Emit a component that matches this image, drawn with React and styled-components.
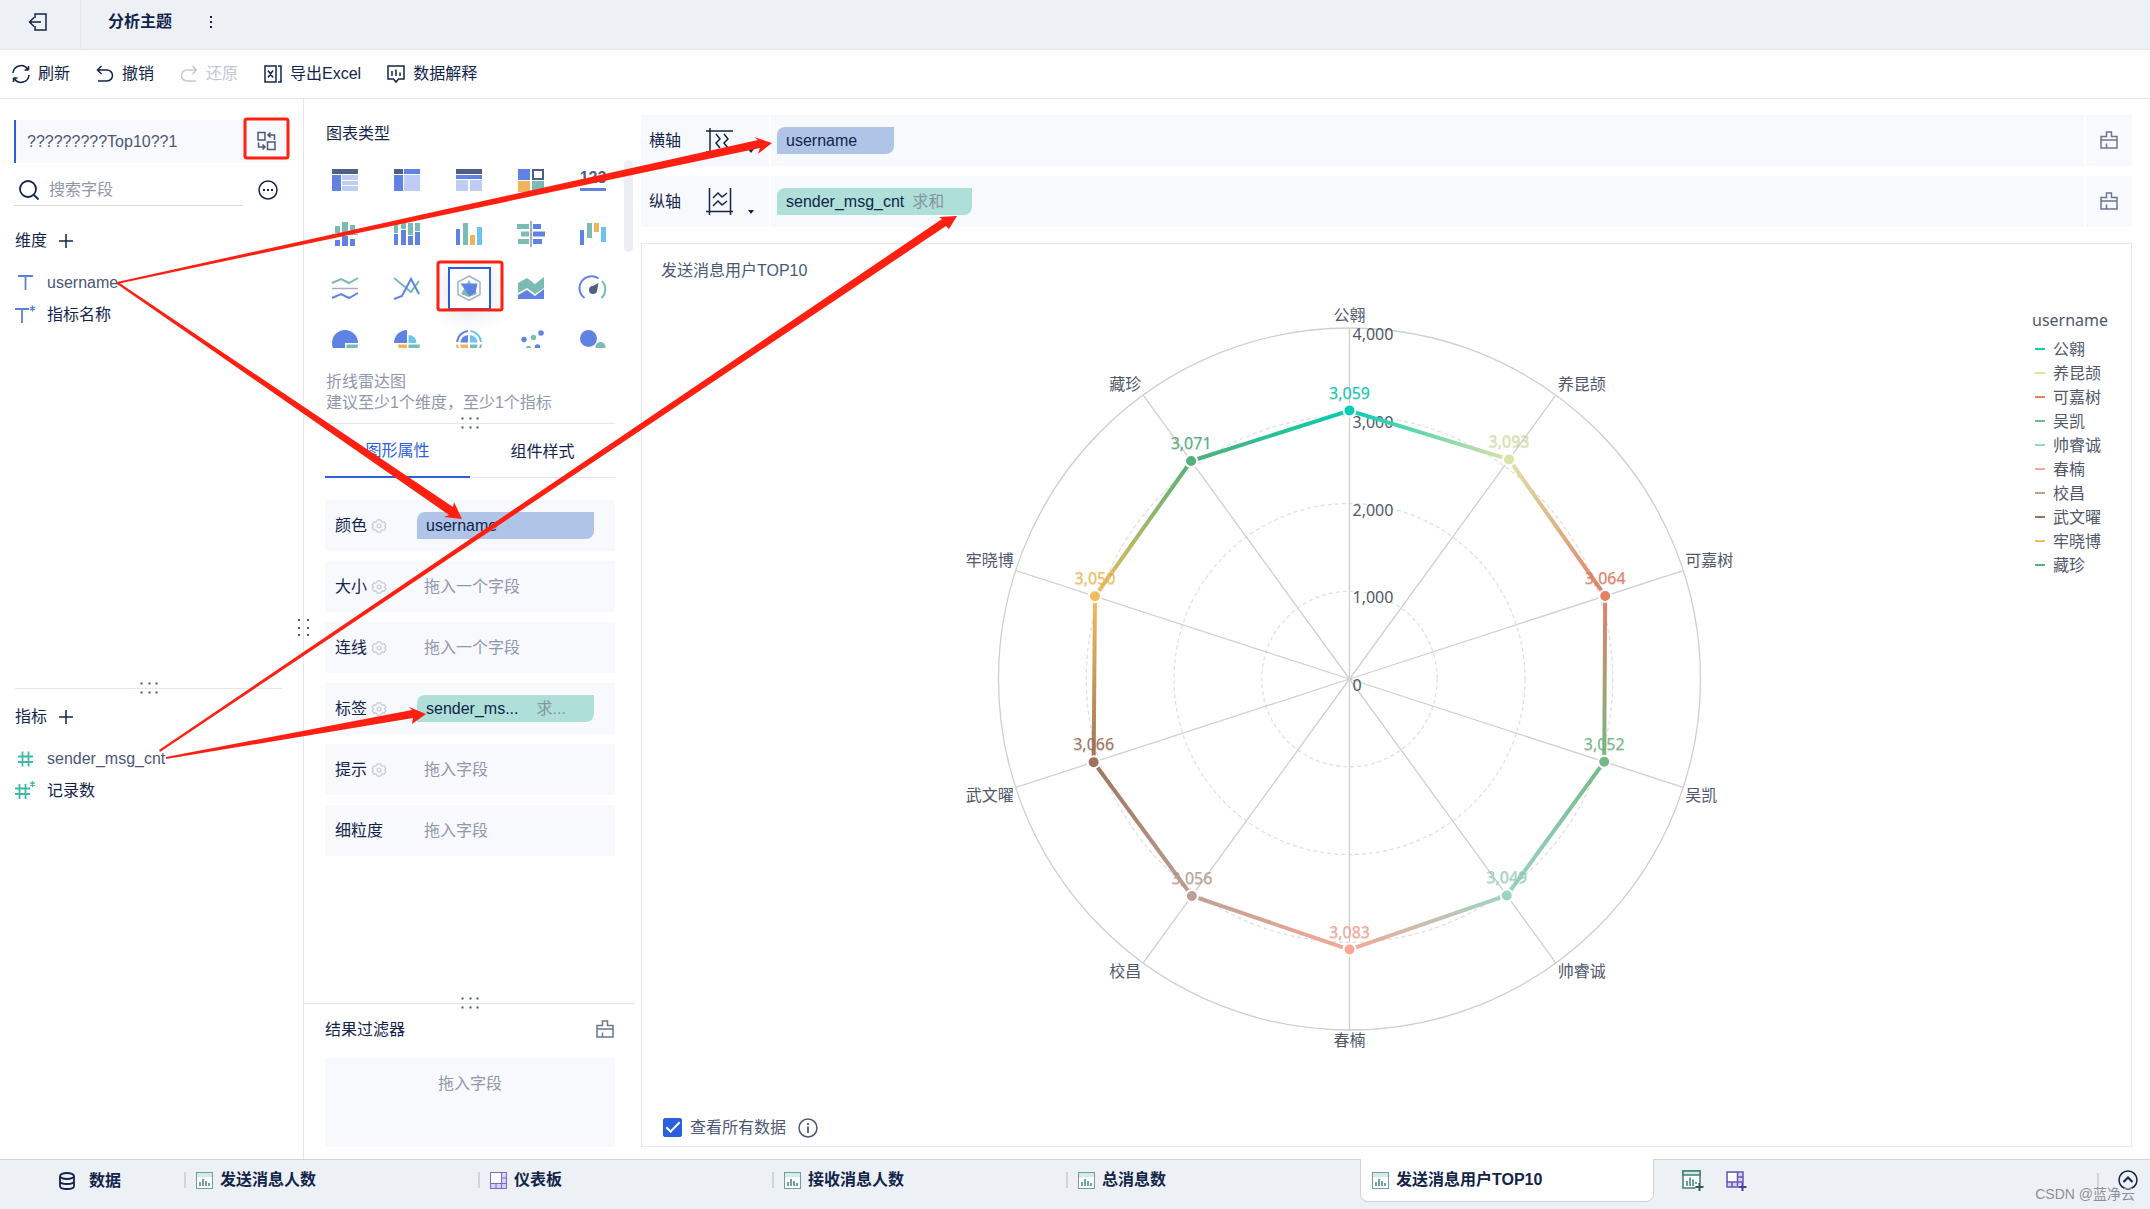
import React from "react";
import styled, { createGlobalStyle } from "styled-components";

const ink = "#12244a";
const soft = "#4a5873";
const muted = "#8f97ab";
const line = "#e4e6ef";
const fill = "#f8f9fd";
const accent = "#2b5fdb";
const red = "#ff2012";
const pal = {
  blue: "#6083e3",
  light: "#bfccf5",
  dark: "#4e5f83",
  green: "#7abcb4",
  orange: "#f0b45e",
  sky: "#6cc3ef",
  grey: "#a6afc3",
};

const GlobalStyle = createGlobalStyle`
  *, *::before, *::after { box-sizing: border-box; }
  body {
    margin: 0;
    background: #fff;
    color: ${ink};
    font: 16px/24px "Liberation Sans", "Noto Sans CJK SC", sans-serif;
  }
  button, input { font: inherit; color: inherit; }
  button { padding: 0; border: 0; background: none; cursor: pointer; }
  ul { margin: 0; padding: 0; list-style: none; }
  h1, h2, p { margin: 0; font-size: 16px; font-weight: 400; }
  svg { display: block; flex: none; overflow: visible; }
`;

const Page = styled.div`
  position: relative;
  display: flex;
  flex-direction: column;
  min-height: 100vh;
  overflow: hidden;
`;

const TopBar = styled.header`
  display: flex;
  align-items: center;
  height: 50px;
  padding-bottom: 6px;
  background: #edf1f6;
  border-bottom: 1px solid ${line};
`;

const ExitButton = styled.button`
  display: flex;
  align-items: center;
  width: 81px;
  height: 49px;
  margin-bottom: -6px;
  padding: 0 0 6px 28px;
  border-right: 1px solid ${line};
`;

const Title = styled.h1`
  padding-left: 27px;
  font-weight: 700;
`;

const MoreButton = styled.button`
  width: 24px;
  height: 24px;
  margin-left: 27px;
  display: grid;
  place-items: center;
`;

const Toolbar = styled.nav`
  display: flex;
  gap: 26px;
  height: 49px;
  padding: 0 12px;
  border-bottom: 1px solid ${line};
`;

const Tool = styled.button`
  display: flex;
  align-items: center;
  gap: 8px;
  color: ${(p) => (p.disabled ? "#c3c8d3" : ink)};
`;

const Workspace = styled.div`
  display: flex;
  flex: 1;
`;

const FieldPanel = styled.aside`
  position: relative;
  display: flex;
  flex-direction: column;
  width: 304px;
  padding: 21px 14px 0;
  border-right: 1px solid ${line};
`;

const Dataset = styled.div`
  display: flex;
  align-items: center;
  justify-content: space-between;
  height: 43px;
  padding: 0 13px 0 11px;
  background: ${fill};
  border-left: 2px solid ${accent};
  color: ${soft};
`;

const SearchRow = styled.div`
  display: flex;
  align-items: center;
  gap: 15px;
  > button { padding: 11px 11px 0 0; }
`;

const SearchBox = styled.label`
  display: flex;
  align-items: center;
  flex: 1;
  gap: 10px;
  min-width: 0;
  height: 43px;
  padding: 11px 0 0 5px;
  border-bottom: 1px solid #d5d8e0;
`;

const SearchInput = styled.input`
  flex: 1;
  min-width: 0;
  padding: 0;
  border: 0;
  outline: 0;
  background: none;
  &::placeholder { color: ${muted}; opacity: 1; }
`;

const FieldSection = styled.section`
  flex: ${(p) => (p.$size ? `0 0 ${p.$size}px` : "1")};
  padding-top: ${(p) => p.$top}px;
`;

const SectionHead = styled.div`
  display: flex;
  align-items: center;
  gap: 12px;
  height: 32px;
  margin-bottom: 10px;
  padding-left: 1px;
`;

const Field = styled.li`
  display: flex;
  align-items: center;
  gap: 9px;
  height: 32px;
  color: ${(p) => (p.$dim ? soft : ink)};
`;

const Divider = styled.div`
  position: relative;
  height: 1px;
  margin: ${(p) => p.$margin || "0"};
  background: ${line};
`;

const Grip = styled.span`
  position: absolute;
  top: 50%;
  left: 50%;
  transform: translate(-50%, -50%);
`;

const PanelGrip = styled.span`
  position: absolute;
  top: 520px;
  right: -7px;
`;

const ConfigPanel = styled.aside`
  display: flex;
  flex-direction: column;
  width: 337px;
  padding-top: 19px;
`;

const PanelTitle = styled.h2`
  padding-left: 22px;
  line-height: 32px;
`;

const Picker = styled.div`
  display: flex;
  height: 198px;
  padding: 3px 0 0 10px;
  overflow: hidden;
`;

const TypeGrid = styled.div`
  display: grid;
  grid-template-columns: repeat(5, 62px);
  grid-auto-rows: 54px;
  place-items: center;
`;

const TypeButton = styled.button`
  display: grid;
  place-items: center;
  width: 43px;
  height: 43px;
  border: 2px solid ${(p) => (p.$active ? accent : "transparent")};
  box-shadow: ${(p) => (p.$active ? "0 4px 20px rgba(40, 60, 110, 0.14)" : "none")};
`;

const ScrollThumb = styled.div`
  width: 9px;
  height: 92px;
  margin-top: 7px;
  border-radius: 5px;
  background: #edeef3;
`;

const Hint = styled.p`
  padding: 23px 0 10px 22px;
  line-height: 21px;
  color: ${muted};
`;

const Tabs = styled.div`
  display: flex;
  height: 54px;
  margin: 0 26px 0 21px;
`;

const Tab = styled.button`
  flex: 1;
  padding-top: 2px;
  color: ${(p) => (p.$active ? accent : ink)};
  border-bottom: ${(p) => (p.$active ? `2px solid ${accent}` : `1px solid ${line}`)};
`;

const PropList = styled.div`
  display: flex;
  flex: 1;
  flex-direction: column;
  gap: 10px;
  padding: 22px 26px 0 21px;
`;

const PropRow = styled.div`
  display: flex;
  align-items: center;
  height: 51px;
  padding: 0 21px 0 10px;
  background: ${fill};
`;

const PropName = styled.div`
  display: flex;
  align-items: center;
  gap: 5px;
  width: 82px;
`;

const Placeholder = styled.span`
  padding-left: 7px;
  color: ${muted};
`;

const Pill = styled.div`
  display: flex;
  align-items: center;
  flex: ${(p) => (p.$fill ? "1" : "none")};
  gap: ${(p) => (p.$fill ? 18 : 8)}px;
  min-width: 0;
  height: 27px;
  padding: 0 ${(p) => (p.$fill ? 26 : p.$pad)}px 0 9px;
  border-radius: 8px 0 8px 0;
  background: ${(p) => (p.$measure ? "#aedfd9" : "#b0c4e8")};
  small { font-size: 16px; color: #8596a2; }
`;

const Filter = styled.section`
  padding-bottom: 12px;
`;

const FilterHead = styled.div`
  display: flex;
  align-items: center;
  justify-content: space-between;
  height: 32px;
  margin: 10px 27px 12px 21px;
`;

const FilterDrop = styled.div`
  height: 89px;
  margin: 0 26px 0 21px;
  padding-top: 14px;
  text-align: center;
  background: ${fill};
  color: ${muted};
`;

const Main = styled.main`
  display: flex;
  flex: 1;
  flex-direction: column;
  min-width: 0;
  padding: 16px 18px 12px 0;
`;

const AxisRow = styled.div`
  display: flex;
  height: 51px;
  margin-bottom: ${(p) => (p.$last ? 16 : 10)}px;
  background: ${fill};
`;

const AxisHead = styled.div`
  display: flex;
  align-items: center;
  width: 130px;
  padding-left: 8px;
  border-right: 2px solid #fff;
`;

const AxisButton = styled.button`
  display: flex;
  align-items: flex-end;
  gap: 15px;
  margin-left: 25px;
`;

const AxisFields = styled.div`
  display: flex;
  align-items: center;
  flex: 1;
  padding-left: 6px;
`;

const ClearButton = styled.button`
  display: grid;
  place-items: center;
  width: 48px;
  border-left: 2px solid #fff;
`;

const Card = styled.section`
  display: flex;
  flex: 1;
  flex-direction: column;
  border: 1px solid ${line};
  color: ${soft};
`;

const CardTitle = styled.h2`
  height: 53px;
  padding: 15px 19px 0;
`;

const ChartRow = styled.div`
  display: flex;
  flex: 1;
  min-height: 0;
  padding: 0 0 48px 25px;
  font-family: "Noto Sans", "Noto Sans CJK SC", sans-serif;
`;

const RadarSvg = styled.svg`
  flex: 1;
  min-width: 0;
  height: 764px;
  text { font-size: 16px; fill: #4f586b; }
`;

const PointLabel = styled.text`
  && { fill: ${(p) => p.$color}; }
  text-shadow: 0 1px 1px rgba(90, 90, 90, 0.25);
`;

const Legend = styled.ul`
  width: 99px;
  padding-top: 11px;
`;

const LegendItem = styled.li`
  display: flex;
  align-items: center;
  gap: 8px;
  height: 24px;
  padding-left: 3px;
  white-space: nowrap;
  color: #4f586b;
  &::before {
    content: "";
    width: 10px;
    height: 2px;
    background: ${(p) => p.$color};
  }
`;

const LegendTitle = styled.p`
  margin-bottom: 5px;
  color: #4f586b;
`;

const CardFooter = styled.div`
  display: flex;
  align-items: center;
  gap: 12px;
  height: 37px;
  padding-left: 21px;
`;

const CheckLabel = styled.label`
  display: flex;
  align-items: center;
  gap: 8px;
`;

const Check = styled.input`
  display: grid;
  place-items: center;
  appearance: none;
  width: 19px;
  height: 19px;
  margin: 0;
  border-radius: 2px;
  border: 1px solid ${accent};
  &:checked { background: ${accent}; }
  &:checked::after {
    content: "";
    width: 14px;
    height: 7px;
    margin-bottom: 4px;
    border: solid #fff;
    border-width: 0 0 2px 2px;
    transform: rotate(-45deg);
  }
`;

const BottomBar = styled.footer`
  display: flex;
  height: 51px;
  background: #edf1f6;
  border-top: 1px solid #cfd2df;
`;

const DataTab = styled.button`
  display: flex;
  align-items: center;
  gap: 14px;
  width: 184px;
  height: 42px;
  padding-left: 59px;
  font-weight: 700;
`;

const SheetTab = styled.button`
  position: relative;
  display: flex;
  align-items: center;
  gap: 7px;
  width: 294px;
  height: ${(p) => (p.$active ? 43 : 40)}px;
  margin-top: ${(p) => (p.$active ? -1 : 0)}px;
  padding-left: ${(p) => (p.$active ? 11 : 12)}px;
  font-weight: 700;
  background: ${(p) => (p.$active ? "#fff" : "none")};
  border: ${(p) => (p.$active ? "1px solid #cfd2df" : "0")};
  border-top: 0;
  border-radius: 0 0 8px 8px;
  &::before {
    content: "";
    display: ${(p) => (p.$active ? "none" : "block")};
    position: absolute;
    left: 0;
    width: 2px;
    height: 16px;
    background: #d0d3dc;
  }
`;

const AddButtons = styled.div`
  display: flex;
  align-items: center;
  flex: 1;
  gap: 23px;
  height: 41px;
  padding-left: 28px;
`;

const Collapse = styled.button`
  display: flex;
  align-items: center;
  gap: 19px;
  height: 39px;
  margin-right: 12px;
  &::before {
    content: "";
    width: 2px;
    height: 14px;
    background: #d0d3dc;
  }
`;

const Watermark = styled.div`
  position: absolute;
  right: 15px;
  bottom: 4px;
  font-size: 14px;
  color: #8d9097;
`;

const Markup = styled.svg`
  position: absolute;
  top: 0;
  left: 0;
  pointer-events: none;
`;

const Glyph = ({ w = 18, h = w, sw = 1.5, color = ink, children }) => (
  <svg width={w} height={h} viewBox={`0 0 ${w} ${h}`} fill="none" stroke={color} strokeWidth={sw} aria-hidden="true">
    {children}
  </svg>
);

const Dots = ({ vertical }) => {
  const cols = vertical ? [0, 9] : [0, 8, 15];
  const rows = vertical ? [0, 8, 15] : [0, 9];
  return (
    <svg width={vertical ? 12 : 17} height={vertical ? 18 : 13} aria-hidden="true">
      {cols.map((x) => rows.map((y) => <rect key={`${x}-${y}`} x={x} y={y} width="2" height="2" fill={soft} />))}
    </svg>
  );
};

const Plus = () => (
  <Glyph w={14}><path d="M7 0v14M0 7h14" /></Glyph>
);

const Gear = () => (
  <Glyph w={14} sw={1.2} color="#c5cad6">
    <path d="M5.300 .8h3.400l.7 1.800 1 .6 1.900-.3 1.500 2.500L12.600 7l1.200 1.600-1.500 2.500-1.900-.3-1 .6-.7 1.800H5.300l-.7-1.800-1-.6-1.900.3L.2 8.600 1.400 7 .2 5.400l1.500-2.500 1.900.3 1-.6z" />
    <circle cx="7" cy="7" r="2" />
  </Glyph>
);

const Brush = () => (
  <Glyph w={18} h={20} color="#6b7690">
    <path d="M1 5.500h5.500V1h5v4.500H17V17H1zM1 9h16M6.500 12.500V17" />
  </Glyph>
);

const SheetIcon = () => (
  <Glyph w={17} sw={1} color="#6f9f98">
    <rect x=".5" y=".5" width="16" height="16" fill="#fff" />
    <rect x="1" y="1" width="15" height="4" fill="#d3ece7" stroke="none" />
    <path d="M4 10v4M7 7v7M10 9v5M13 11v3" stroke="#3f877c" strokeWidth="1.5" />
  </Glyph>
);

const BoardIcon = () => (
  <Glyph w={17} sw={1} color="#7a6cc4">
    <rect x=".5" y=".5" width="16" height="16" fill="#d9d2f7" />
    <rect x="1" y="1" width="10" height="10" fill="#fff" stroke="none" />
    <path d="M11.500 .5v16M.5 11.500h16M11.500 6h5M6 11.500v5" />
  </Glyph>
);

const AddSheet = () => (
  <Glyph w={21} sw={1.5} color="#3f7f76">
    <path d="M1 1h17v17H1z" fill="#fff" />
    <path d="M1 1h17v4H1z" fill="#cfeae4" />
    <path d="M5 11v5M8 7.500V16M11 9.500V16M14 12v2" />
    <path d="M17.500 13v8M13.500 17h8" stroke="#edf1f6" strokeWidth="4" />
    <path d="M17.500 13v8M13.500 17h8" stroke="#2a5f58" strokeWidth="2" />
  </Glyph>
);

const AddBoard = () => (
  <Glyph w={21} sw={1.5} color="#6456b8">
    <path d="M1 2h16v15H1z" fill="#d9d2f7" />
    <path d="M2 3h9v9H2z" fill="#fff" stroke="none" />
    <path d="M11.500 2v15M1 12h16M12 7h5M6 12v5" />
    <path d="M16.500 13v8M12.500 17h8" stroke="#edf1f6" strokeWidth="4" />
    <path d="M16.500 13v8M12.500 17h8" stroke="#4a3aa8" strokeWidth="2" />
  </Glyph>
);

const TextType = ({ star }) => (
  <svg width="24" height="20" fill="none" stroke="#5a80cf" strokeWidth="1.8" aria-hidden="true">
    {star ? (
      <><path d="M1 4h14M8 4v14" /><path d="M18.500 .5v6M16 2l5 3M16 5l5-3" strokeWidth="1.3" /></>
    ) : (
      <path d="M4 3h15M11.500 3v14" />
    )}
  </svg>
);

const NumberType = ({ star }) => (
  <svg width="24" height="20" fill="none" stroke="#3fb8aa" strokeWidth="1.8" aria-hidden="true">
    {star ? (
      <><path d="M1 7.500h15M1 13h15M5.500 3v15M11.500 3v15" /><path d="M18.500 0v6M16 1.500l5 3M16 4.500l5-3" strokeWidth="1.3" /></>
    ) : (
      <path d="M4 7.500h15M4 13h15M8.500 2.500v15M14.500 2.500v15" />
    )}
  </svg>
);

const R = (c, x, y, w, h) => <rect key={`${x},${y}`} x={x} y={y} width={w} height={h} fill={pal[c]} />;

const chartTypes = [
  ["分组表", <>{R("dark", 0, 1, 26, 5)}{R("blue", 0, 7, 9, 16)}{R("light", 10, 7, 16, 5)}{R("light", 10, 13, 16, 4)}{R("light", 10, 18, 16, 5)}</>],
  ["交叉表", <>{R("dark", 0, 1, 9, 5)}{R("blue", 10, 1, 16, 5)}{R("blue", 0, 7, 9, 16)}{R("light", 10, 7, 16, 16)}</>],
  ["明细表", <>{R("dark", 0, 1, 26, 5)}{R("blue", 0, 7, 26, 4)}{R("light", 0, 12, 12, 11)}{R("light", 14, 12, 12, 11)}</>],
  ["颜色表格", <>{R("blue", 0, 1, 12, 11)}{R("orange", 0, 13, 12, 11)}{R("green", 14, 13, 12, 11)}<rect x="15" y="2" width="10" height="9" fill="#fff" stroke={pal.dark} strokeWidth="2" /></>],
  ["指标卡", <><text x="13" y="15" textAnchor="middle" fontSize="16" fontWeight="700" fill={pal.dark}>123</text>{R("blue", 0, 20, 26, 3)}</>],
  ["堆积柱形图", <>{R("green", 3, 4, 5, 7)}{R("green", 10, 0, 6, 11)}{R("green", 18, 3, 5, 8)}{R("grey", 0, 12, 26, 1)}{R("blue", 3, 18, 5, 6)}{R("blue", 10, 14, 6, 10)}{R("blue", 18, 17, 5, 7)}</>],
  ["百分比柱形图", <>{R("green", 0, 1, 4, 10)}{R("green", 7, 1, 5, 6)}{R("green", 14, 1, 5, 12)}{R("green", 21, 1, 5, 8)}{R("blue", 0, 12, 4, 11)}{R("blue", 7, 8, 5, 15)}{R("blue", 14, 14, 5, 9)}{R("blue", 21, 10, 5, 13)}</>],
  ["分区柱形图", <>{R("blue", 0, 7, 4, 16)}{R("green", 7, 1, 5, 22)}{R("orange", 14, 13, 5, 10)}{R("sky", 21, 5, 5, 18)}</>],
  ["对比条形图", <>{R("green", -1, 2, 12, 5)}{R("green", 3, 9.5, 8, 5)}{R("green", 0, 17, 11, 5)}{R("grey", 12, -1, 2, 26)}{R("blue", 15, 2, 8, 5)}{R("blue", 15, 9.5, 12, 5)}{R("blue", 15, 17, 9, 5)}</>],
  ["瀑布图", <>{R("blue", 0, 8, 4, 15)}{R("green", 7, 1, 5, 15)}{R("orange", 14, 1, 5, 9)}{R("sky", 21, 5, 5, 15)}</>],
  ["折线图", <g fill="none" strokeWidth="2"><path d="M0 7l9-4 8 4 9-5" stroke={pal.green} /><path d="M0 12.500h26" stroke={pal.grey} strokeWidth="1.5" /><path d="M0 22l9-4 8 4 9-5" stroke={pal.blue} /></g>],
  ["范围折线图", <g fill="none" strokeWidth="2"><path d="M0 2l17 14 8-11" stroke={pal.green} /><path d="M0 23l8-3 9-17 8 15" stroke={pal.blue} /></g>],
  ["折线雷达图", <><path d="M13 0l11 6v12.500l-11 6-11-6V6z" fill="none" stroke={pal.grey} strokeWidth="1.5" /><path d="M13 4l8 14-8 3-8-3z" fill={pal.green} /><path d="M4.500 7.500h17l-2 9-6 3.500z" fill={pal.blue} /></>],
  ["面积图", <><path d="M0 7l9-5 8 6 9-7v11l-9 6-8-6-9 5z" fill={pal.green} /><path d="M0 19l9-5 8 6 9-7v10H0z" fill={pal.blue} /></>],
  ["仪表盘", <><g fill="none" strokeWidth="2"><path d="M4.500 22A12 12 0 0 1 18.500 2.500" stroke={pal.blue} /><path d="M22 5a12 12 0 0 1-.5 17" stroke={pal.green} /></g><circle cx="13" cy="14" r="4" fill={pal.dark} /><path d="M10 11.500L18.500 7 17 15z" fill={pal.dark} /></>],
  ["饼图", <><path d="M13 13V26A13 13 0 1 1 26 13z" fill={pal.blue} /><path d="M14.500 14.500H26A12 12 0 0 1 14.500 26z" fill={pal.green} /></>],
  ["玫瑰图", <><path d="M13 13H0A13 13 0 0 1 13 0z" fill={pal.blue} /><path d="M14.500 13V5a8 8 0 0 1 8 8z" fill={pal.sky} /><path d="M13 14.500v9a9 9 0 0 1-9-9z" fill={pal.orange} /><path d="M14.500 14.500H26A12 12 0 0 1 14.500 26z" fill={pal.green} /></>],
  ["多层饼图", <><g fill="none" strokeWidth="2"><path d="M1 12A12 12 0 0 1 12 1" stroke={pal.blue} /><path d="M14.500 1A12 12 0 0 1 25 12" stroke={pal.sky} /><path d="M1 14.500A12 12 0 0 0 12 25" stroke={pal.orange} /><path d="M25 14.500A12 12 0 0 1 14.500 25" stroke={pal.green} /></g><path d="M12 12.500H4.500A8 8 0 0 1 12 5z" fill={pal.blue} /><path d="M14 12.500V5a8 8 0 0 1 7.500 7.500z" fill={pal.sky} /><path d="M12 14.500v8a8 8 0 0 1-7.500-8z" fill={pal.orange} /><path d="M14 14.500h7.500a8 8 0 0 1-7.500 8z" fill={pal.green} /></>],
  ["散点图", <><g fill={pal.blue}><circle cx="6" cy="9.500" r="2.7" /><circle cx="23" cy="3" r="2.8" /><circle cx="19.500" cy="17" r="2.8" /></g><g fill={pal.green}><circle cx="15.500" cy="7.500" r="2.7" /><circle cx="10.500" cy="18.500" r="2.7" /></g></>],
  ["聚合气泡图", <><circle cx="8.500" cy="8.500" r="8.500" fill={pal.blue} /><circle cx="20.500" cy="17" r="5" fill={pal.green} /></>],
];

const series = [
  ["公翱", 3059, "#06cdb4"],
  ["养昆颉", 3093, "#dde3a5"],
  ["可嘉树", 3064, "#e38066"],
  ["吴凯", 3052, "#75b987"],
  ["帅睿诚", 3049, "#99d5c6"],
  ["春楠", 3083, "#f6a897"],
  ["校昌", 3056, "#bda094"],
  ["武文曜", 3066, "#9f735b"],
  ["牢晓博", 3050, "#f2bd58"],
  ["藏珍", 3071, "#54b07c"],
];

const radius = 351;
const maxValue = 4000;
const fmt = (n) => n.toLocaleString("en-US");
const polar = (i, r) => {
  const a = (i / series.length) * Math.PI * 2;
  return [Math.sin(a) * r, -Math.cos(a) * r];
};

function Radar() {
  const points = series.map(([, v], i) => polar(i, (v / maxValue) * radius));
  return (
    <RadarSvg viewBox="-470 -382 940 764" role="img" aria-label="发送消息用户TOP10">
      <defs>
        {points.map(([x, y], i) => {
          const n = (i + 1) % points.length;
          return (
            <linearGradient key={i} id={`edge${i}`} gradientUnits="userSpaceOnUse" x1={x} y1={y} x2={points[n][0]} y2={points[n][1]}>
              <stop offset="0" stopColor={series[i][2]} />
              <stop offset="1" stopColor={series[n][2]} />
            </linearGradient>
          );
        })}
      </defs>
      {[1000, 2000, 3000].map((v) => (
        <circle key={v} r={(v / maxValue) * radius} fill="none" stroke="#e0e0e0" strokeWidth="1.3" strokeDasharray="4 3" />
      ))}
      <circle r={radius} fill="none" stroke="#cfcfcf" strokeWidth="1.3" />
      {series.map(([name], i) => {
        const [x, y] = polar(i, radius);
        return <line key={name} x2={x} y2={y} stroke="#cfcfcf" strokeWidth="1.3" />;
      })}
      {series.map(([name], i) => {
        const [x, y] = polar(i, radius);
        const center = Math.abs(x) < 1;
        const anchor = center ? "middle" : x > 0 ? "start" : "end";
        const shift = center ? (y < 0 ? -7 : 16) : y < 0 ? -5 : 14;
        return (
          <text key={name} x={x + (center ? 0 : Math.sign(x) * 2)} y={y + shift} textAnchor={anchor}>{name}</text>
        );
      })}
      {[0, 1000, 2000, 3000, 4000].map((v) => (
        <text key={v} x="3" y={12 - (v / maxValue) * radius}>{fmt(v)}</text>
      ))}
      {points.map(([x, y], i) => {
        const [nx, ny] = points[(i + 1) % points.length];
        return <line key={i} x1={x} y1={y} x2={nx} y2={ny} stroke={`url(#edge${i})`} strokeWidth="4" />;
      })}
      {points.map(([x, y], i) => (
        <g key={i}>
          <circle cx={x} cy={y} r="6" fill={series[i][2]} stroke="#fff" strokeWidth="2" />
          <PointLabel x={x} y={y - 12} textAnchor="middle" $color={series[i][2]}>{fmt(series[i][1])}</PointLabel>
        </g>
      ))}
    </RadarSvg>
  );
}

const props = [
  { name: "颜色", gear: true, pill: <Pill $fill>username</Pill> },
  { name: "大小", gear: true, hint: "拖入一个字段" },
  { name: "连线", gear: true, hint: "拖入一个字段" },
  { name: "标签", gear: true, pill: <Pill $fill $measure>sender_ms... <small>求...</small></Pill> },
  { name: "提示", gear: true, hint: "拖入字段" },
  { name: "细粒度", hint: "拖入字段" },
];

const sheets = [
  { name: "发送消息人数" },
  { name: "仪表板", board: true },
  { name: "接收消息人数" },
  { name: "总消息数" },
  { name: "发送消息用户TOP10", active: true },
];

const XAxisIcon = () => (
  <Glyph w={27}><path d="M0 4h27M4 1v26M0 25h23" /><path d="M10 7l4 5-4 4 4 5M18 7l4 5-4 4 4 5" /></Glyph>
);
const YAxisIcon = () => (
  <Glyph w={27}><path d="M3.500 0v27M24.500 0v27M0 23.500h27" /><path d="M7 10l5-5 4 4 5-4M7 18l5-5 4 4 5-4" /></Glyph>
);
const Caret = () => (
  <svg width="6" height="5" aria-hidden="true"><path d="M0 0h6L3 4z" fill={ink} /></svg>
);

export default function App() {
  return (
    <Page>
      <GlobalStyle />
      <TopBar>
        <ExitButton aria-label="退出">
          <Glyph w={20}><path d="M7 6V2h11v16H7v-4M13 10H1.500M6 5.500L1.500 10 6 14.500" /></Glyph>
        </ExitButton>
        <Title>分析主题</Title>
        <MoreButton aria-label="更多">
          <svg width="2" height="14" aria-hidden="true" fill={ink}><path d="M0 1h2v2H0zM0 6h2v2H0zM0 11h2v2H0z" /></svg>
        </MoreButton>
      </TopBar>

      <Toolbar>
        <Tool>
          <Glyph><path d="M1 8a8 8 0 0 1 14.500-4M17 10a8 8 0 0 1-14.500 4M16.500 1v4M16.500 5h-4M1.500 17v-4M1.500 13h4" /></Glyph>
          刷新
        </Tool>
        <Tool>
          <Glyph><path d="M5.500 1L1.500 5l4 4M1.500 5H11a5.500 5.500 0 0 1 0 11H2" /></Glyph>
          撤销
        </Tool>
        <Tool disabled>
          <Glyph color="#c3c8d3"><path d="M12.500 1l4 4-4 4M16.500 5H7a5.500 5.500 0 0 0 0 11h9" /></Glyph>
          还原
        </Tool>
        <Tool>
          <Glyph><path d="M12 1H1v16h11zM4 5.500l5 7M9 5.500l-5 7M14 1h3v16h-3" /></Glyph>
          导出Excel
        </Tool>
        <Tool>
          <Glyph><path d="M1 1h16v13h-5.500L9 17l-2.500-3H1zM5 6v5M9 4.500V11M13 7.500V11" /></Glyph>
          数据解释
        </Tool>
      </Toolbar>

      <Workspace>
        <FieldPanel>
          <Dataset>
            ?????????Top10??1
            <button aria-label="切换数据">
              <Glyph w={19} h={21} color={soft}><path d="M1 1.500h7V9H1zM10.500 11h7.500v7.500h-7.500zM11 4h6.500v5M13.500 1.500L11 4l2.500 2.500M1.500 11.500v4.500H8M5.500 13.500L8 16l-2.500 2.500" /></Glyph>
            </button>
          </Dataset>
          <SearchRow>
            <SearchBox>
              <Glyph w={20} sw={1.8}><circle cx="9" cy="9" r="8" /><path d="M15 15l4.500 4.500" /></Glyph>
              <SearchInput placeholder="搜索字段" aria-label="搜索字段" />
            </SearchBox>
            <button aria-label="更多选项">
              <Glyph w={20}>
                <circle cx="10" cy="10" r="9" />
                <path d="M5 10h2M9 10h2M13 10h2" strokeWidth="2" />
              </Glyph>
            </button>
          </SearchRow>
          <FieldSection $top={19}>
            <SectionHead>维度 <button aria-label="添加维度"><Plus /></button></SectionHead>
            <ul>
              <Field $dim><TextType />username</Field>
              <Field><TextType star />指标名称</Field>
            </ul>
          </FieldSection>
          <Divider $margin="0 7px 0 1px"><Grip><Dots /></Grip></Divider>
          <FieldSection $top={12} $size={470}>
            <SectionHead>指标 <button aria-label="添加指标"><Plus /></button></SectionHead>
            <ul>
              <Field $dim><NumberType />sender_msg_cnt</Field>
              <Field><NumberType star />记录数</Field>
            </ul>
          </FieldSection>
          <PanelGrip><Dots vertical /></PanelGrip>
        </FieldPanel>

        <ConfigPanel>
          <PanelTitle>图表类型</PanelTitle>
          <Picker>
            <TypeGrid>
              {chartTypes.map(([name, art]) => (
                <TypeButton key={name} aria-label={name} $active={name === "折线雷达图"}>
                  <svg width="26" height="24" aria-hidden="true">{art}</svg>
                </TypeButton>
              ))}
            </TypeGrid>
            <ScrollThumb />
          </Picker>
          <Hint>折线雷达图<br />建议至少1个维度，至少1个指标</Hint>
          <Divider $margin="0 26px 0 21px"><Grip><Dots /></Grip></Divider>
          <Tabs>
            <Tab $active>图形属性</Tab>
            <Tab>组件样式</Tab>
          </Tabs>
          <PropList>
            {props.map((p) => (
              <PropRow key={p.name}>
                <PropName>{p.name}{p.gear && <Gear />}</PropName>
                {p.pill || <Placeholder>{p.hint}</Placeholder>}
              </PropRow>
            ))}
          </PropList>
          <Filter>
            <Divider $margin="0 6px 0 0"><Grip><Dots /></Grip></Divider>
            <FilterHead>
              <h2>结果过滤器</h2>
              <button aria-label="清空过滤器"><Brush /></button>
            </FilterHead>
            <FilterDrop>拖入字段</FilterDrop>
          </Filter>
        </ConfigPanel>

        <Main>
          <AxisRow>
            <AxisHead>横轴<AxisButton aria-label="横轴设置"><XAxisIcon /><Caret /></AxisButton></AxisHead>
            <AxisFields><Pill $pad={37}>username</Pill></AxisFields>
            <ClearButton aria-label="清空横轴"><Brush /></ClearButton>
          </AxisRow>
          <AxisRow $last>
            <AxisHead>纵轴<AxisButton aria-label="纵轴设置"><YAxisIcon /><Caret /></AxisButton></AxisHead>
            <AxisFields><Pill $measure $pad={28}>sender_msg_cnt <small>求和</small></Pill></AxisFields>
            <ClearButton aria-label="清空纵轴"><Brush /></ClearButton>
          </AxisRow>
          <Card>
            <CardTitle>发送消息用户TOP10</CardTitle>
            <ChartRow>
              <Radar />
              <Legend>
                <li><LegendTitle>username</LegendTitle></li>
                {series.map(([name, , color]) => (
                  <LegendItem key={name} $color={color}>{name}</LegendItem>
                ))}
              </Legend>
            </ChartRow>
            <CardFooter>
              <CheckLabel><Check type="checkbox" defaultChecked />查看所有数据</CheckLabel>
              <Glyph w={20} color={soft}><circle cx="10" cy="10" r="9" /><path d="M10 8.500V15M10 5v2" strokeWidth="1.8" /></Glyph>
            </CardFooter>
          </Card>
        </Main>
      </Workspace>

      <BottomBar>
        <DataTab>
          <Glyph w={16} h={18} sw={1.8}><ellipse cx="8" cy="4" rx="7" ry="3" /><path d="M1 4v10c0 4 14 4 14 0V4M1 9c0 4 14 4 14 0" /></Glyph>
          数据
        </DataTab>
        {sheets.map((s) => (
          <SheetTab key={s.name} $active={s.active}>
            {s.board ? <BoardIcon /> : <SheetIcon />}
            {s.name}
          </SheetTab>
        ))}
        <AddButtons>
          <button aria-label="添加组件"><AddSheet /></button>
          <button aria-label="添加仪表板"><AddBoard /></button>
        </AddButtons>
        <Collapse aria-label="展开">
          <Glyph w={20}><circle cx="10" cy="10" r="9" /><path d="M5.500 12L10 7.500l4.500 4.500" strokeWidth="2" /></Glyph>
        </Collapse>
      </BottomBar>
      <Watermark>CSDN @蓝净云</Watermark>

      <Markup width="2150" height="1209" fill={red} aria-hidden="true">
        <g fill="none" stroke={red} strokeWidth="3">
          <rect x="245" y="119" width="43" height="39" rx="2" />
          <rect x="438" y="262" width="64" height="48" rx="2" />
        </g>
        <path d="M117 282L758 140 754 137 772 143 758 154 760 148 117 284z" />
        <path d="M118 282L453 507 454 502 462 519 444 517 449 515 117 284z" />
        <path d="M159 750L942 219 939 217 957 216 949 229 946 226 160 752z" />
        <path d="M166 757L412 710 409 707 426 714 412 724 413 718 166 759z" />
      </Markup>
    </Page>
  );
}
